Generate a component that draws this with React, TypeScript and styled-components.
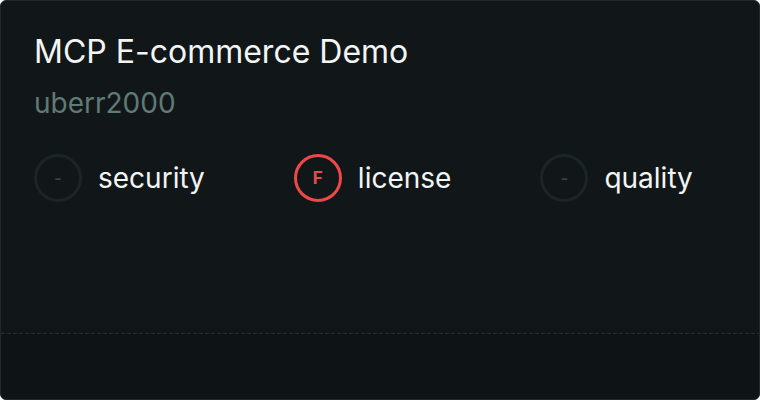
import React from "react";
import styled, { createGlobalStyle } from "styled-components";

const Global = createGlobalStyle`
  html, body { margin: 0; padding: 0; background: #ffffff; }
  body { font-family: Inter, "Noto Sans", sans-serif; }
`;

const Card = styled.div`
  box-sizing: border-box;
  width: 760px;
  height: 400px;
  background: #111719;
  border: 1px solid #20282a;
  border-radius: 6px;
  overflow: hidden;
  display: flex;
  flex-direction: column;
`;

const Body = styled.div`
  flex: 1;
  padding: 31px 33px 0 33px;
  display: flex;
  flex-direction: column;
`;

const Title = styled.div`
  color: #f3f5f5;
  font-size: 32px;
  line-height: 40px;
  font-weight: 400;
`;

const Author = styled.div`
  margin-top: 15px;
  color: #607a76;
  font-size: 28px;
  line-height: 32px;
`;

const Scores = styled.div`
  margin-top: 35px;
  display: flex;
  align-items: center;
  gap: 89px;
`;

const Score = styled.div`
  display: flex;
  align-items: center;
  gap: 16px;
`;

const Ring = styled.div<{ $grade?: boolean }>`
  box-sizing: border-box;
  width: 48px;
  height: 48px;
  border-radius: 50%;
  border: 3px solid ${(p) => (p.$grade ? "#f04848" : "#1d2427")};
  display: flex;
  align-items: center;
  justify-content: center;
  color: ${(p) => (p.$grade ? "#f04848" : "#3a4346")};
  font-size: ${(p) => (p.$grade ? "17px" : "16px")};
  font-weight: ${(p) => (p.$grade ? 700 : 600)};
`;

const Label = styled.div`
  color: #f3f5f5;
  font-size: 28px;
  line-height: 32px;
`;

const Footer = styled.div`
  height: 66px;
  background: #0e1316;
  position: relative;
  flex-shrink: 0;
  &::before {
    content: "";
    position: absolute;
    left: 0;
    right: 0;
    top: 0;
    height: 1px;
    background: repeating-linear-gradient(
      to right,
      #262e31 0 4px,
      transparent 4px 6px
    );
  }
`;

const scores = [
  { label: "security", grade: "-" },
  { label: "license", grade: "F" },
  { label: "quality", grade: "-" },
];

export default function App() {
  return (
    <>
      <Global />
      <Card>
        <Body>
          <Title>MCP E-commerce Demo</Title>
          <Author>uberr2000</Author>
          <Scores>
            {scores.map((s) => (
              <Score key={s.label}>
                <Ring $grade={s.grade !== "-"}>{s.grade}</Ring>
                <Label>{s.label}</Label>
              </Score>
            ))}
          </Scores>
        </Body>
        <Footer />
      </Card>
    </>
  );
}
